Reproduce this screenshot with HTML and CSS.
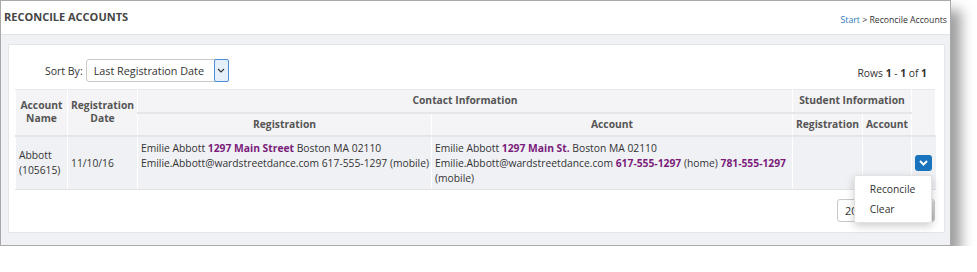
FILE: index.html
```html
<!DOCTYPE html>
<html>
<head>
<meta charset="utf-8">
<link rel="stylesheet" href="styles.css">
</head>
<body>
<div class="frame">
  <div class="header">
    <div class="title">RECONCILE ACCOUNTS</div>
    <div class="crumbs"><a class="crumb-link">Start</a> &gt; Reconcile Accounts</div>
  </div>
  <div class="panel">
    <div class="toolbar">
      <div class="sort">
        <span class="sort-label">Sort By:</span>
        <div class="select sort-select">
          <span class="select-text">Last Registration Date</span>
          <span class="select-arrow">
            <svg width="8" height="5" viewBox="0 0 8 5"><path d="M1 1 L4 4 L7 1" fill="none" stroke="#333" stroke-width="1.1"/></svg>
          </span>
        </div>
      </div>
      <div class="rows">Rows <b>1</b> - <b>1</b> of <b>1</b></div>
    </div>
    <table class="grid">
      <colgroup>
        <col class="c1"><col class="c2"><col class="c3"><col class="c4"><col class="c5"><col class="c6"><col class="c7">
      </colgroup>
      <thead>
        <tr>
          <th rowspan="2">Account<br>Name</th>
          <th rowspan="2">Registration<br>Date</th>
          <th colspan="2">Contact Information</th>
          <th colspan="2">Student Information</th>
          <th rowspan="2"></th>
        </tr>
        <tr>
          <th>Registration</th>
          <th>Account</th>
          <th>Registration</th>
          <th>Account</th>
        </tr>
      </thead>
      <tbody>
        <tr>
          <td class="mid">Abbott<br>(105615)</td>
          <td class="mid">11/10/16</td>
          <td class="top">Emilie Abbott <b class="hl">1297 Main Street</b> Boston MA 02110<br>Emilie.Abbott@wardstreetdance.com 617-555-1297 (mobile)</td>
          <td class="top">Emilie Abbott <b class="hl">1297 Main St.</b> Boston MA 02110<br>Emilie.Abbott@wardstreetdance.com <b class="hl">617-555-1297</b> (home) <b class="hl">781-555-1297</b> (mobile)</td>
          <td></td>
          <td></td>
          <td class="act">
            <div class="dropdown">
              <span class="act-btn">
                <svg width="9" height="6" viewBox="0 0 9 6"><path d="M1 1 L4.5 4.5 L8 1" fill="none" stroke="#fff" stroke-width="2"/></svg>
              </span>
              <div class="menu">
                <div class="menu-item">Reconcile</div>
                <div class="menu-item">Clear</div>
              </div>
            </div>
          </td>
        </tr>
      </tbody>
    </table>
    <div class="footer">
      <div class="select page-select">
        <span class="select-text">20</span>
        <span class="page-arrow"></span>
      </div>
    </div>
  </div>
</div>
</body>
</html>
```

FILE: styles.css
```css
* { box-sizing: border-box; }
html, body { margin: 0; padding: 0; background: #fff; }
body {
  font-family: "Open Sans", "Liberation Sans", sans-serif;
  color: #333;
}
.frame {
  width: 951px;
  height: 246px;
  border: 1px solid #a9a9a9;
  background: #f0f1f5;
  box-shadow: 10px 10px 12px rgba(0,0,0,0.38);
}
.header {
  height: 34px;
  background: #fff;
  border-bottom: 1px solid #e2e3e8;
  display: flex;
  align-items: center;
  justify-content: space-between;
  padding: 0 3px 0 3px;
}
.title {
  font-size: 11px;
  font-weight: 700;
  color: #444;
  margin-top: -2px;
}
.crumbs {
  font-size: 8.7px;
  color: #333;
  margin-top: 4px;
}
.crumb-link { color: #2a7ab8; }
.panel {
  margin: 9px 5px 0 7px;
  height: 189px;
  background: #fff;
  border: 1px solid #e4e5ea;
  padding: 14px 9px 0 6px;
}
.toolbar {
  display: flex;
  align-items: center;
  justify-content: space-between;
  height: 23px;
  margin-bottom: 7px;
}
.sort {
  display: flex;
  align-items: center;
  padding-left: 30px;
}
.sort-label {
  font-size: 10.5px;
  color: #333;
  margin-right: 4px;
}
.select {
  display: flex;
  align-items: center;
  height: 23px;
  border: 1px solid #c9c9c9;
  border-radius: 3px;
  background: #fff;
  font-size: 10.8px;
  color: #333;
}
.sort-select { width: 143px; margin-left: -1px; }
.select-text { flex: 1; padding-left: 7px; white-space: nowrap; }
.select-arrow {
  width: 15px;
  height: 23px;
  margin: -1px -1px -1px 0;
  border: 1px solid #4a8fd6;
  border-radius: 2px;
  background: #e5f0fb;
  display: flex;
  align-items: center;
  justify-content: center;
}
.rows {
  font-size: 10.3px;
  color: #333;
  padding-right: 8px;
  margin-top: 4px;
}
.rows b { font-weight: 700; }
.grid {
  width: 920px;
  border-collapse: collapse;
  table-layout: fixed;
  font-size: 10.3px;
}
.c1 { width: 52px; }
.c2 { width: 70px; }
.c3 { width: 294px; }
.c4 { width: 361px; }
.c5 { width: 70px; }
.c6 { width: 49px; }
.c7 { width: 24px; }
.grid th {
  background: #f4f4f6;
  color: #555;
  font-weight: 700;
  line-height: 13px;
  padding: 4px 2px;
  border: 1px solid #fff;
  border-top: 1px solid #e6e6ea;
  border-bottom: 2px solid #e6e6ea;
  text-align: center;
  height: 23px;
  white-space: nowrap;
}
.grid tbody td {
  background: #f0f1f5;
  line-height: 15px;
  padding: 4px 1px 3px 3px;
  border-left: 1px solid #fff;
  border-bottom: 1px solid #e2e2e6;
  color: #333;
}
.grid td.mid { vertical-align: middle; }
.grid td.top { vertical-align: top; }
.hl { color: #7a1c7a; font-weight: 700; }
.grid td.act {
  padding: 0;
  text-align: center;
  vertical-align: middle;
}
.dropdown {
  position: relative;
  display: inline-block;
  vertical-align: middle;
}
.act-btn {
  display: flex;
  width: 17px;
  height: 16px;
  border-radius: 3px;
  background: #1a74bd;
  align-items: center;
  justify-content: center;
  margin-left: -1px;
}
.menu {
  position: absolute;
  top: 20px;
  right: 0;
  width: 78px;
  background: #fff;
  border: 1px solid #e3e3e3;
  border-radius: 2px;
  box-shadow: 0 3px 8px rgba(0,0,0,0.2);
  padding: 3px 0;
  text-align: left;
  z-index: 5;
}
.menu-item {
  height: 20px;
  line-height: 20px;
  padding-left: 15px;
  font-size: 10.3px;
  color: #333;
}
.footer {
  display: flex;
  justify-content: flex-end;
  padding-top: 9px;
}
.page-select {
  width: 98px;
}
.page-select .select-text { padding-left: 7px; }
.page-arrow {
  width: 15px;
  height: 21px;
  background: linear-gradient(#dadada, #b9b9b9);
  border-radius: 0 2px 2px 0;
}
```
